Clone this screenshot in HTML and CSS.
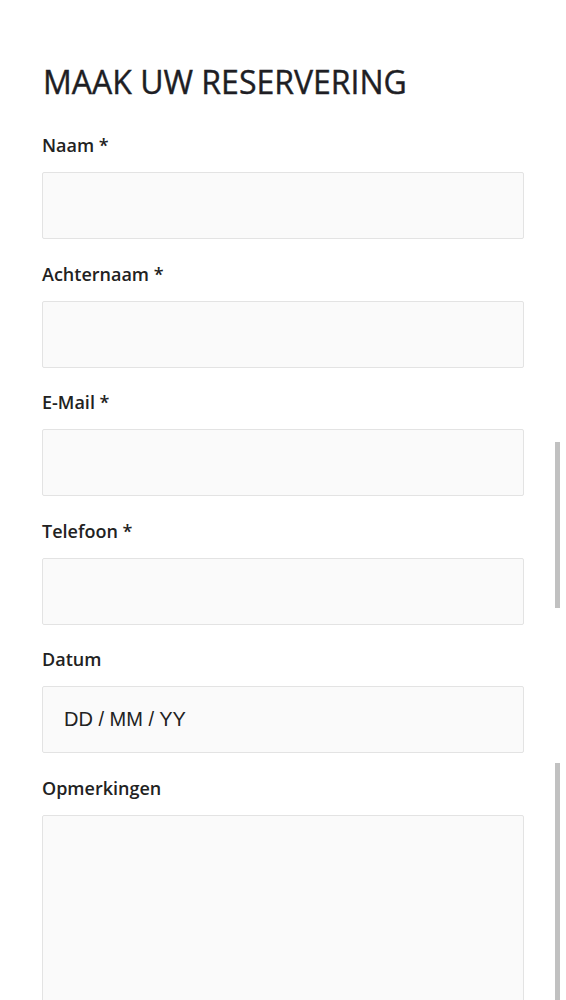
FILE: index.html
```html
<!doctype html>

<html>
  <head>
    <meta http-equiv="Content-Type" content="text/html; charset=utf-8">
    <title>Maak uw reservering</title>
    <link rel="stylesheet" href="styles.css">
  </head>
  <body>

    <div class="form">
      <h1>MAAK UW RESERVERING</h1>

      <form method="POST" action="/reserveren">
        <div class="field">
          <label for="naam">Naam *</label>
          <input type="text" name="naam" id="naam">
        </div>

        <div class="field">
          <label for="achternaam">Achternaam *</label>
          <input type="text" name="achternaam" id="achternaam">
        </div>

        <div class="field">
          <label for="email">E-Mail *</label>
          <input type="email" name="email" id="email">
        </div>

        <div class="field">
          <label for="telefoon">Telefoon *</label>
          <input type="tel" name="telefoon" id="telefoon">
        </div>

        <div class="field">
          <label for="datum">Datum</label>
          <input type="text" name="datum" id="datum" class="date" placeholder="DD / MM / YY">
        </div>

        <div class="field">
          <label for="opmerkingen">Opmerkingen</label>
          <textarea name="opmerkingen" id="opmerkingen"></textarea>
        </div>
      </form>
    </div>

    <div class="bar bar-top"></div>
    <div class="bar bar-bottom"></div>

  </body>
</html>
```

FILE: styles.css
```css
html, body {
  overflow: hidden;
}

body {
  background:   #fff;
  color:        #222;
  font:         16px/1.5 "Open Sans", "Liberation Sans", Arial, sans-serif;
  margin:       0;
  padding:      0;
}

.form {
  padding: 62px 42px 0 43px;
}

h1 {
  font-size: 32px;
  font-weight: normal;
  line-height: 40px;
  margin: 0 0 31px 0;
  color: #1e1e24;
  -webkit-text-stroke: 0.4px #1e1e24;
}

form {
  margin: 0 0 0 -1px;
  padding: 0;
}

.field {
  padding-bottom: 22.6px;
}

label {
  display: block;
  font-size: 18px;
  font-weight: 600;
  line-height: 24px;
  margin-bottom: 15px;
  color: #222;
}

input, textarea {
  box-sizing: border-box;
  display: block;
  width: 482px;
  height: 67px;
  margin: 0;
  padding: 0 21px;
  background: #fafafa;
  border: 1px solid #e3e3e3;
  border-radius: 2px;
  font: 20px "Liberation Sans", Arial, sans-serif;
  color: #222;
  outline: none;
}

.date::placeholder {
  color: #222;
  opacity: 1;
}

textarea {
  height: 220px;
  resize: none;
}

.bar {
  position: absolute;
  left: 555px;
  width: 5px;
  background: #c1c1c1;
}
.bar-top {
  top: 442px;
  height: 166px;
}
.bar-bottom {
  top: 763px;
  height: 237px;
}
```
